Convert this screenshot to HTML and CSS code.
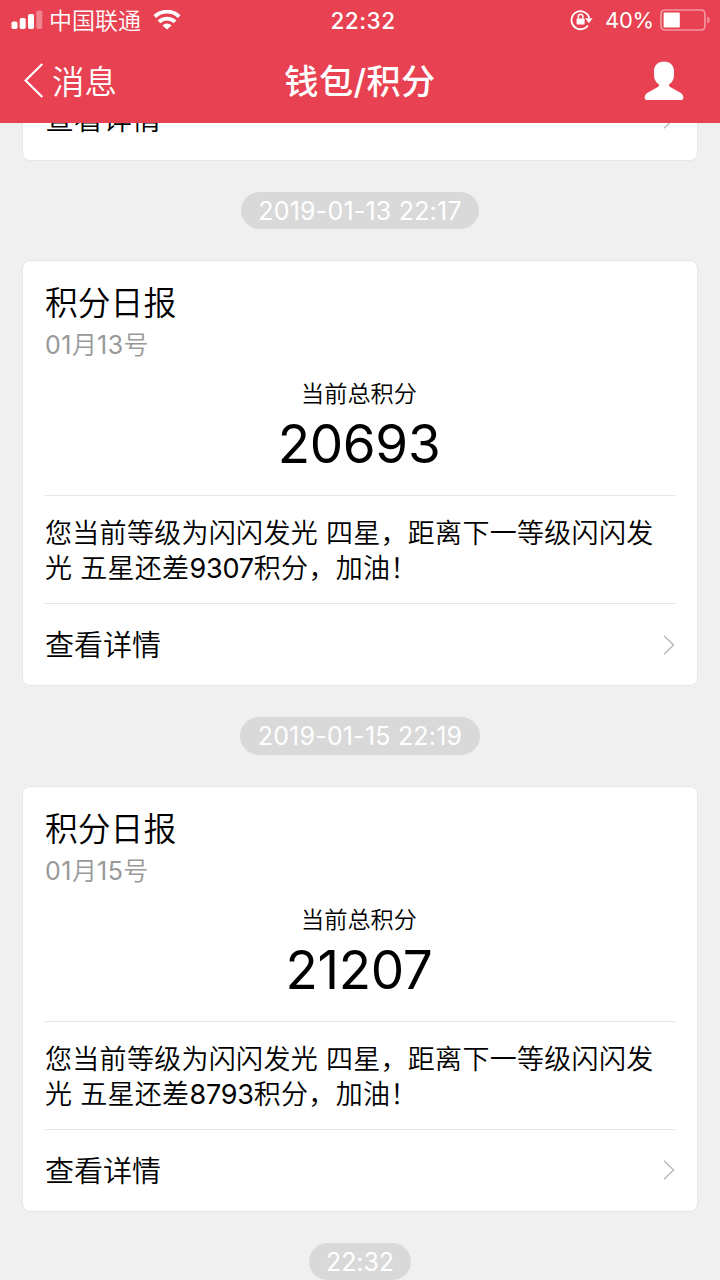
FILE: index.html
```html
<!DOCTYPE html>
<html lang="zh-CN">
<head>
    <meta charset="UTF-8">
    <meta name="viewport" content="width=device-width, initial-scale=1.0">
    <title>钱包/积分</title>
    <link rel="stylesheet" href="styles.css">
</head>
<body>
    <header class="header">
        <div class="status-bar">
            <div class="status-left">
                <svg class="signal" width="32" height="20" viewBox="0 0 32 20" fill="#fff">
                    <rect x="0.5" y="11.5" width="6" height="7.5" rx="1.8"/>
                    <rect x="8.7" y="8" width="6" height="11" rx="1.8"/>
                    <rect x="17" y="4" width="6" height="15" rx="1.8"/>
                    <rect x="25.3" y="0.5" width="6" height="18.5" rx="1.8" opacity="0.35"/>
                </svg>
                <span class="carrier">中国联通</span>
                <svg class="wifi" width="28" height="20" viewBox="0 0 28 20" fill="none" stroke="#fff" stroke-width="3.8">
                    <path d="M1.8 6.6a17.500 17.500 0 0 1 24.4 0"/>
                    <path d="M6 11.8a11.5 11.5 0 0 1 16 0"/>
                    <path d="M9.4 15.4a6.7 6.7 0 0 1 9.2 0L14 19.6z" fill="#fff" stroke="none"/>
                </svg>
            </div>
            <span class="clock">22:32</span>
            <div class="status-right">
                <svg class="lock" width="24" height="22" viewBox="0 0 24 22">
                    <path d="M17.8 16.5A9 9 0 1 1 19.2 9" fill="none" stroke="#fff" stroke-width="1.8"/>
                    <path d="M15.2 9.3h7.4L18.9 14.3z" fill="#fff"/>
                    <rect x="6.6" y="9.5" width="8" height="6" rx="0.8" fill="#fff"/>
                    <path d="M8.3 9.5V7.5a2.3 2.3 0 0 1 4.6 0v2" fill="none" stroke="#fff" stroke-width="1.5"/>
                </svg>
                <span class="percent">40%</span>
                <svg class="battery" width="51" height="22" viewBox="0 0 51 22">
                    <rect x="1" y="1" width="44" height="20" rx="4" fill="none" stroke="#fff" stroke-width="1.7" opacity="0.45"/>
                    <rect x="3.6" y="3.6" width="16.2" height="14.8" rx="1.2" fill="#fff"/>
                    <path d="M47.3 7.6c3.2 1.2 3.2 5.6 0 6.8z" fill="#fff" opacity="0.45"/>
                </svg>
            </div>
        </div>
        <nav class="nav-bar">
            <a class="back">
                <svg width="20" height="36" viewBox="0 0 20 36" fill="none" stroke="#fff" stroke-width="2.2">
                    <path d="M18.3 1L1.6 17.5l16.7 16.5"/>
                </svg>
                <span>消息</span>
            </a>
            <h1 class="title">钱包/积分</h1>
            <a class="profile">
                <svg width="40" height="40" viewBox="0 0 40 40" fill="#fff">
                    <path d="M20 .5C26 .5 30 4.500 30 10v4c0 4-1.7 7.5-5 9.500v1.500c2 2 7 4 11 6.500 2.800 1.800 3.300 3 3.300 5s-1 2.600-2.300 2.600H3C1.700 39.100.7 38.500.7 36.500s.5-3.200 3.300-5c4-2.500 9-4.500 11-6.500v-1.500c-3.300-2-5-5.500-5-9.500v-4C10 4.500 14 .5 20 .5z"/>
                </svg>
            </a>
        </nav>
    </header>

    <main class="feed">
        <section class="card">
            <a class="card-link">
                <span>查看详情</span>
                <svg class="arrow" width="12" height="20" viewBox="0 0 12 20"><path d="M1 .7L10.5 10 1 19.3"/></svg>
            </a>
        </section>

        <time class="stamp">2019-01-13 22:17</time>

        <section class="card">
            <div class="card-head">
                <h2>积分日报</h2>
                <p class="date"><span class="num">01</span>月<span class="num">13</span>号</p>
            </div>
            <div class="score">
                <p class="score-label">当前总积分</p>
                <p class="score-value">20693</p>
            </div>
            <p class="message">您当前等级为闪闪发光 四星，距离下一等级闪闪发光 五星还差<span class="num">9307</span>积分，加油！</p>
            <a class="card-link">
                <span>查看详情</span>
                <svg class="arrow" width="12" height="20" viewBox="0 0 12 20"><path d="M1 .7L10.5 10 1 19.3"/></svg>
            </a>
        </section>

        <time class="stamp">2019-01-15 22:19</time>

        <section class="card">
            <div class="card-head">
                <h2>积分日报</h2>
                <p class="date"><span class="num">01</span>月<span class="num">15</span>号</p>
            </div>
            <div class="score">
                <p class="score-label">当前总积分</p>
                <p class="score-value">21207</p>
            </div>
            <p class="message">您当前等级为闪闪发光 四星，距离下一等级闪闪发光 五星还差<span class="num">8793</span>积分，加油！</p>
            <a class="card-link">
                <span>查看详情</span>
                <svg class="arrow" width="12" height="20" viewBox="0 0 12 20"><path d="M1 .7L10.5 10 1 19.3"/></svg>
            </a>
        </section>

        <time class="stamp stamp-short">22:32</time>
    </main>
</body>
</html>
```

FILE: styles.css
```css
* {
    margin: 0;
    padding: 0;
    box-sizing: border-box;
}

body {
    height: 1280px;
    overflow: hidden;
    background-color: #f0f0f0;
    color: #000;
    font-family: Inter, "Noto Sans CJK SC", sans-serif;
    font-weight: 350;
}

svg {
    display: block;
    flex: none;
}

/* Header stays over the scrolled feed */
.header {
    position: fixed;
    top: 0;
    left: 0;
    width: 100%;
    height: 123px;
    background-color: #e84151;
    color: #fff;
}

.status-bar {
    display: grid;
    grid-template-columns: 1fr auto 1fr;
    align-items: center;
    height: 40px;
    padding: 0 9px 0 11px;
}

.status-left,
.status-right {
    display: flex;
    align-items: center;
}

.status-right {
    justify-content: flex-end;
}

.carrier {
    margin: 0 12px 0 6px;
    padding-top: 2px;
    font-size: 23px;
    line-height: 38px;
}

.clock {
    padding-left: 4px;
    font-size: 22.5px;
    font-weight: 500;
    letter-spacing: 0.5px;
}

.percent {
    margin: 0 6px 0 11px;
    font-size: 22px;
    font-weight: 400;
    letter-spacing: -0.2px;
}

.nav-bar {
    display: grid;
    grid-template-columns: 1fr auto 1fr;
    align-items: center;
    height: 81px;
    padding: 0 36px 0 24px;
}

.back {
    display: flex;
    align-items: center;
    gap: 8px;
    font-size: 32.5px;
    line-height: 46px;
}

.back span {
    padding-top: 4px;
}

.title {
    margin-left: 12px;
    padding-top: 2px;
    font-size: 34.2px;
    font-weight: 500;
    letter-spacing: 0.4px;
    line-height: 46px;
}

.profile {
    justify-self: end;
}

.feed {
    display: flex;
    flex-direction: column;
    align-items: center;
    padding: 76.5px 22px 0;
}

.card {
    align-self: stretch;
    padding: 0 22px;
    background-color: #fff;
    border: 1px solid #e6e6e6;
    border-radius: 8px;
}

.card-head {
    padding-top: 19px;
}

.card-head h2 {
    font-size: 32.8px;
    font-weight: 350;
    line-height: 46px;
}

.num {
    font-weight: 400;
}

.date {
    color: #999;
    font-size: 25px;
    line-height: 38px;
}

.date .num {
    letter-spacing: 0.5px;
}

.score {
    height: 131px;
    padding-top: 12px;
    text-align: center;
}

.score-label {
    padding-right: 2px;
    font-size: 23.2px;
    line-height: 36px;
}

.score-value {
    padding-right: 2px;
    font-size: 53px;
    font-weight: 400;
    letter-spacing: -0.3px;
    line-height: 65px;
}

.message {
    height: 108px;
    padding-top: 20px;
    border-top: 1px solid #e6e6e6;
    font-size: 27px;
    letter-spacing: 0.3px;
    line-height: 35px;
}

.message .num {
    letter-spacing: -0.2px;
}

.card-link {
    display: flex;
    justify-content: space-between;
    align-items: center;
    height: 82px;
    font-size: 29px;
}

.card-link span {
    padding-bottom: 3px;
}

.message + .card-link {
    border-top: 1px solid #e6e6e6;
}

.arrow {
    fill: none;
    stroke: #bbb;
    stroke-width: 1.5;
}

.stamp {
    height: 37.5px;
    margin: 31px 0;
    padding: 0 17.5px;
    border-radius: 19px;
    background-color: #d9d9d9;
    color: #fff;
    font-size: 25px;
    font-weight: 400;
    letter-spacing: 0.2px;
    line-height: 38.5px;
}

.stamp-short {
    padding: 0 17px;
    letter-spacing: -0.1px;
}
```
